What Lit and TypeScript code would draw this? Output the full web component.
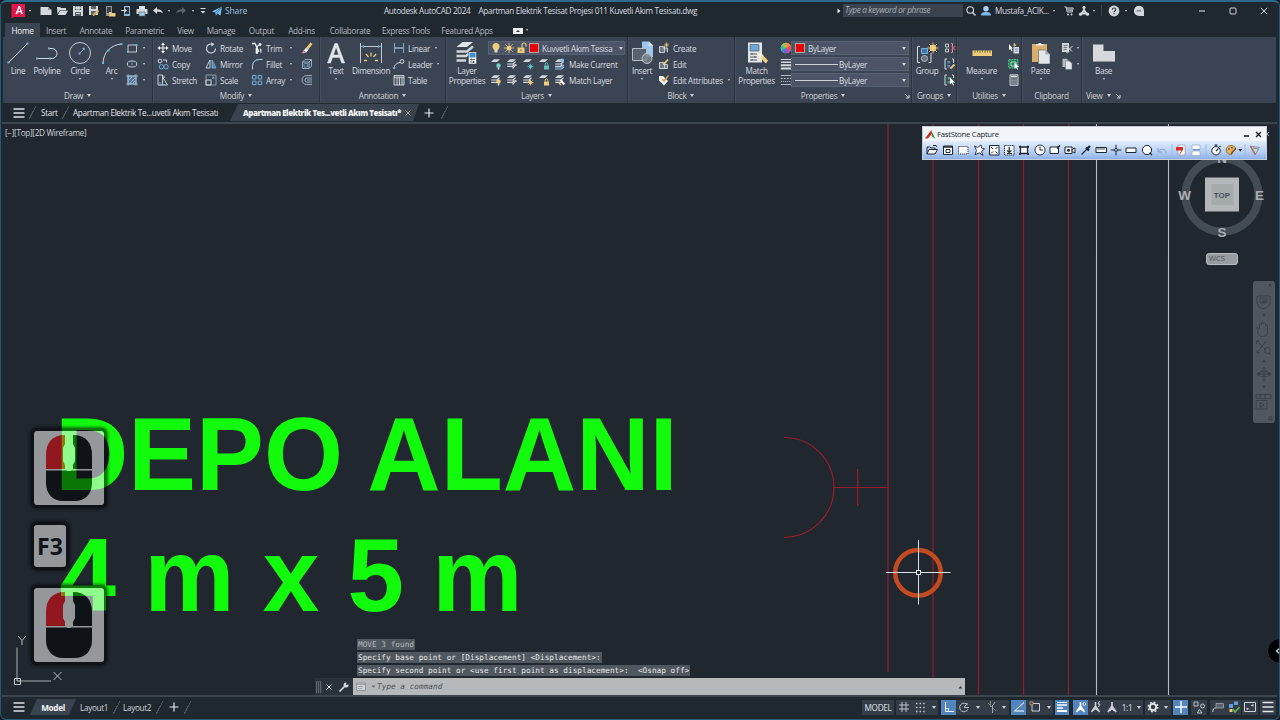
import { LitElement, html, svg, css } from "lit";
import { customElement } from "lit/decorators.js";
import { classMap } from "lit/directives/class-map.js";

const icon = (w: number, h: number, body: unknown) =>
  html`<svg class="ic" width=${w} height=${h} viewBox="0 0 ${w} ${h}">${body}</svg>`;

const W = "#d5d9dd";
const B = "#6fb0e0";
const Y = "#f0cc7a";

const A: Record<string, unknown> = {
  // title bar
  logo: icon(16, 16, svg`<path d="M1 1h3v14H1z" fill="#9a1230"/><path d="M2 1h13v13H4l-2 1z" fill="#e2174b"/><path d="M5.500 11L8.600 3h1.300L13 11h-1.800l-.6-1.800H7.900L7.300 11zM8.300 7.900h2L9.300 5z" fill="#fff"/>`),
  newf: icon(12, 12, svg`<path d="M.5 2H8l3.500 3v5H.5z" fill="${W}"/><path d="M8 2v3h3.500z" fill="#8b939b"/>`),
  open: icon(12, 12, svg`<path d="M1 2h3l1 1h5v2H4L1.500 9z" fill="${W}"/><path d="M4.200 5.500H12L9.500 10H1.800z" fill="${W}"/>`),
  save: icon(12, 12, svg`<path d="M1 1h10v10H1z" fill="${W}"/><path d="M3 1h6v4H3zM3 7h6v4H3z" fill="#59626c"/><path d="M4 2h4v2H4zM4 8.500h4" stroke="${W}" fill="${W}"/>`),
  saveas: icon(12, 12, svg`<path d="M1 1h9v9H1z" fill="${W}"/><path d="M3 1h5v3H3zM3 6h5v4H3z" fill="#59626c"/><path d="M5 10.500l5.500-5" stroke="#e6b45f" stroke-width="2"/>`),
  openweb: icon(12, 12, svg`<path d="M2 1h6v10H2z" fill="#8f979f"/><path d="M3 2h4v6H3z" fill="#3b444e"/><path d="M5 7h2l1 1h3.500v3.500H5z" fill="${Y}"/>`),
  saveweb: icon(12, 12, svg`<path d="M4 1h6v10H4z" fill="#8fb8dc"/><path d="M5 2.200h4v6.800H5z" fill="#2d3741"/><path d="M1 5.500h5M4 3.500l2.500 2L4 7.500" stroke="${W}" fill="none"/>`),
  print: icon(12, 12, svg`<path d="M3 1h6v3H3z" fill="#cfe4f4"/><path d="M.5 4h11v5h-11z" fill="${W}"/><path d="M3 7h6v4H3z" fill="#9fd0ec" stroke="#4c555f" stroke-width=".6"/>`),
  undo: icon(12, 10, svg`<path d="M1 4.500L5 1v2.200c3.500 0 5.500 1.500 6 4.300C9.500 6 8 5.700 5 5.700V8z" fill="${W}"/>`),
  redo: icon(12, 10, svg`<path d="M11 4.500L7 1v2.200C3.500 3.200 1.500 4.700 1 7.500 2.500 6 4 5.700 7 5.700V8z" fill="#59626c"/>`),
  custom: icon(8, 8, svg`<path d="M1.500 1.500h5" stroke="${W}"/><path d="M1.500 4h5L4 6.500z" fill="${W}"/>`),
  share: icon(12, 12, svg`<path d="M1 6.500L11 1.500 9.500 10.500 6 8.500 5 11 4.200 7.500z" fill="#7cc0f0"/><path d="M4.200 7.500L11 1.500 6 8.500" stroke="#1f4f78" stroke-width=".6" fill="none"/>`),
  search: icon(12, 12, svg`<circle cx="5.200" cy="5" r="3.300" fill="none" stroke="${W}" stroke-width="1.100"/><path d="M7.600 7.500L10.500 10.500" stroke="${W}" stroke-width="1.300"/>`),
  user: icon(12, 12, svg`<circle cx="6" cy="3.700" r="2.700" fill="#a8d4f5"/><path d="M1 10.500c0-3 2-3.500 5-3.500s5 .5 5 3.500z" fill="#7cb8ea"/>`),
  cart: icon(12, 12, svg`<path d="M1.500 2h1.700l1 5h5l1-4H4" fill="none" stroke="${W}"/><path d="M4 3.500h6L9 6.500H4.500z" fill="#8d959d"/><circle cx="5" cy="9.500" r="1" fill="${W}"/><circle cx="8.500" cy="9.500" r="1" fill="${W}"/>`),
  adsk: icon(12, 12, svg`<path d="M6 1v4L2.500 10M6 5l3.500 5M3.500 8.500h5" stroke="${W}" stroke-width="1.800" fill="none"/><circle cx="6" cy="2.500" r="1.600" fill="${W}"/><circle cx="2.500" cy="9.200" r="1.600" fill="${W}"/><circle cx="9.500" cy="9.200" r="1.600" fill="${W}"/>`),
  help: icon(12, 12, svg`<circle cx="6" cy="6" r="5.400" fill="${W}"/><path d="M4.300 4.700c0-2.300 3.500-2.200 3.500-.1C7.800 6 6 5.900 6 7.300M6 8.300v1.200" stroke="#28313a" fill="none" stroke-width="1.100"/>`),
  chat: icon(12, 12, svg`<path d="M6 .8a5 5 0 1 0 0 10.200h5V6A5 5 0 0 0 6 .8z" fill="${W}"/><path d="M3 6.500l1.500-2 1.500 1 1.500-1.500 1 2.500z" fill="#808890"/>`),
  min: icon(8, 8, svg`<path d="M1 4h6" stroke="#e4e7ea"/>`),
  max: icon(8, 8, svg`<rect x="1" y="1" width="6" height="6" rx="1" fill="none" stroke="#e4e7ea" stroke-width=".9"/>`),
  close: icon(8, 8, svg`<path d="M.8 .8l6.400 6.400M7.200 .8L.8 7.200" stroke="#e4e7ea" stroke-width=".9"/>`),
  // draw
  line: icon(24, 24, svg`<path d="M2.500 21.500L21.500 2.500" stroke="${W}" stroke-width="1"/><path d="M1.500 20.500h2v2h-2zM20.500 1.500h2v2h-2z" fill="${B}"/>`),
  polyline: icon(24, 24, svg`<path d="M2 17.500h15a5 5 0 1 0 0-10H14" stroke="${W}" fill="none"/><path d="M1 16.500h2v2H1zM13 6.500h2v2h-2zM14 16.500h2v2h-2z" fill="${B}"/>`),
  circle: icon(24, 24, svg`<circle cx="12" cy="12" r="10.500" fill="none" stroke="${W}" stroke-width=".9"/><path d="M11.500 12.500l4.500-4.500" stroke="${B}"/><path d="M10.500 11.500h2v2h-2z" fill="${B}"/><path d="M14 7l3-.5-.5 3z" fill="${B}"/>`),
  arc: icon(24, 24, svg`<path d="M3 22C3.500 11 11 4 21.500 3" fill="none" stroke="${W}"/><path d="M2 21h2v2H2zM7.500 8.500h2v2h-2zM20.500 2h2v2h-2z" fill="${B}"/>`),
  rect: icon(12, 12, svg`<path d="M2 3h8.500v7H2z" fill="none" stroke="${W}" stroke-width=".9"/><path d="M1 9h2v2H1zM9.500 2h2v2h-2z" fill="${B}"/>`),
  ellipse: icon(12, 12, svg`<ellipse cx="6" cy="6" rx="4.800" ry="3" fill="none" stroke="${W}" stroke-width=".9"/><path d="M5.300 5.300h1.500v1.500H5.300zM5.300 2.300h1.500v1.200H5.300z" fill="${B}"/>`),
  hatch: icon(12, 12, svg`<path d="M2 2h8v8H2z" fill="#56799c" stroke="${B}"/><path d="M2 0v12M10 0v12M0 2h12M0 10h12" stroke="${W}" stroke-width=".6"/><path d="M3 6l3-3M4 9l5-5M7 9l2-2" stroke="#cde" stroke-width=".5"/>`),
  // modify
  move: icon(12, 12, svg`<path d="M6 2v8M2 6h8" stroke="#f2f4f6" stroke-width="1.100"/><path d="M6 .5L8 3H4zM6 11.500L4 9h4zM.5 6L3 4v4zM11.500 6L9 8V4z" fill="#f2f4f6"/>`),
  rotate: icon(12, 12, svg`<path d="M7.500 2.300A4.500 4.500 0 1 0 10.500 6.500" fill="none" stroke="${W}" stroke-width="1.100"/><path d="M6 .3l3.500 2L6.500 4.600z" fill="${W}"/>`),
  trim: icon(12, 12, svg`<path d="M1 1.500h3L8 10M7.500 3L5 7" stroke="#f2f4f6" stroke-width="1.300" fill="none"/><circle cx="9" cy="2.500" r="1.400" fill="#f2f4f6"/><path d="M5 7h1.500v4.500H5zM9 7h1v4" stroke="#f2f4f6" stroke-width=".7" fill="#f2f4f6"/>`),
  eraser: icon(12, 12, svg`<path d="M5 6l4.500-5.500L11.500 2 7 8z" fill="${Y}"/><path d="M2.500 8.500L5 6l2.200 2-2 2.500z" fill="#fff"/><path d="M.8 10.500L2.600 8.500l2.400 2-2.500 1z" fill="#e78ea0"/>`),
  copy: icon(12, 12, svg`<circle cx="3" cy="3" r="1.900" fill="none" stroke="${W}"/><path d="M6 2h3.500v2.500" fill="none" stroke="${W}"/><circle cx="4.500" cy="8.800" r="2.200" fill="none" stroke="${B}"/><circle cx="9" cy="8.800" r="2.200" fill="none" stroke="${B}"/>`),
  mirror: icon(12, 12, svg`<path d="M5 2v8H1z" fill="none" stroke="${W}" stroke-width=".9"/><path d="M7 2v8h4z" fill="#4f85b3" stroke="${B}" stroke-width=".9"/>`),
  fillet: icon(12, 12, svg`<path d="M1.500 11.500V8A6.500 6.500 0 0 1 8 1.500h3.500" fill="none" stroke="${W}" stroke-width=".9"/><path d="M1.500 7.500A6 6 0 0 1 7.500 1.500" fill="none" stroke="${B}"/>`),
  box: icon(12, 12, svg`<path d="M1.500 4h6.500v6.500H1.500zM1.500 4L4 1.500h6.500L8 4M10.500 1.500V8L8 10.500" fill="none" stroke="#9fb8cc" stroke-width=".9"/><path d="M3 5.500h3.500V9H3z" fill="none" stroke="${B}" stroke-width=".7"/>`),
  stretch: icon(12, 12, svg`<path d="M1 1h4.500v10H1zM5.500 3l5 8h-5M7 1.500L7 4" fill="none" stroke="${W}" stroke-width=".9"/><path d="M3 8v3h5" fill="none" stroke="${B}"/>`),
  scale: icon(12, 12, svg`<path d="M1 1h10v10H1z" fill="none" stroke="#9aa7b3" stroke-width=".9"/><path d="M1 6h5v5H1z" fill="none" stroke="${W}"/><path d="M6.500 5.500l2.500-2.500M7 3h2v2" stroke="${B}" fill="none" stroke-width=".8"/>`),
  array: icon(12, 12, svg`<path d="M1.500 1.500h3.500v3.500H1.500zM7.200 1.500h3.500v3.500H7.200zM1.500 7.200h3.500v3.500H1.500zM7.200 7.200h3.500v3.500H7.200z" fill="none" stroke="${B}"/>`),
  offset: icon(12, 12, svg`<path d="M11 1.500H5.500a4.500 4.500 0 0 0 0 9H11" fill="none" stroke="#9fb8cc" stroke-width=".9"/><path d="M11 4H6a2 2 0 0 0 0 4.200h5M11 6H6" fill="none" stroke="#9fb8cc" stroke-width=".9"/>`),
  // annotation
  text: icon(22, 24, svg`<path d="M2.500 22L9.800 2.500h2.600L19.700 22h-3l-2-5.500H7.500l-2 5.500zM8.400 13.900h5.400L11.100 6z" fill="#e3e6e9" stroke="#e3e6e9" stroke-width=".5"/>`),
  dimension: icon(24, 24, svg`<path d="M1.500 2v20M22.500 2v20M2.500 5.500h19" stroke="${W}" fill="none" stroke-width=".9"/><path d="M2 5.500l3-1.500v3zM22 5.500l-3-1.500v3z" fill="${B}"/><path d="M5 19.500h3M16 19.500h3M7 13l2.500 3M17 13l-2.500 3M12 11.500v4" stroke="${Y}" stroke-width="1.300"/>`),
  linear: icon(12, 12, svg`<path d="M1.500 1v10M10.500 1v10" stroke="${B}"/><path d="M2 6h8" stroke="${W}"/>`),
  leader: icon(12, 12, svg`<path d="M1 11C1 7 4 5 7 4.500" fill="none" stroke="${W}"/><circle cx="9" cy="3.500" r="1.900" fill="none" stroke="${W}"/><path d="M0 9l1.200 2.500L3 9.500z" fill="${B}"/>`),
  table: icon(12, 12, svg`<path d="M1 1.500h10v9.500H1z" fill="#515b68" stroke="${W}" stroke-width=".9"/><path d="M1 3.300h10M4 3v8M6.500 3v8M9 3v8" stroke="${W}" stroke-width=".9"/>`),
  // layers
  layerprops: icon(26, 24, svg`<path d="M8.500 1H19l-6 5H2.500z" fill="#e3e6e9"/><path d="M2.500 10.500H13l6-5M2.500 15H12l3-2.500M2.500 19.500H12" stroke="#d0d4d8" stroke-width="2.400" fill="none"/><path d="M14.500 11h8v12h-8z" fill="#f1f3f5" stroke="#3b4453" stroke-width=".5"/><path d="M15.500 12h6v4.500h-6z" fill="#3f91d5"/><path d="M16 18.500h5M16 21h5M17.500 17.500v2M19.500 20v2" stroke="#424b57" stroke-width=".8"/>`),
  bulb: icon(10, 12, svg`<circle cx="5" cy="4.500" r="3.500" fill="${Y}"/><path d="M3.500 7h3v3.500h-3z" fill="#e8dcb8"/>`),
  sun: icon(12, 12, svg`<circle cx="6" cy="6" r="2.600" fill="${Y}"/><path d="M6 .8v2M6 9.200v2M.8 6h2M9.200 6h2M2.300 2.300l1.400 1.400M8.300 8.300l1.400 1.400M9.700 2.300L8.300 3.700M3.700 8.300L2.300 9.700" stroke="${Y}" stroke-width=".9"/>`),
  unlock: icon(12, 12, svg`<path d="M1.500 5.500h7v5.500h-7z" fill="${Y}"/><path d="M6 5.500V3a2 2 0 0 1 4 0v1.500" fill="none" stroke="${Y}" stroke-width="1.200"/><path d="M4.500 7.500h1v1.500h-1z" fill="#3b4453"/>`),
  // block
  insert: icon(24, 24, svg`<path d="M12 .5h7l4 4V16H12z" fill="#9cc8ec"/><path d="M19 .5v4h4z" fill="#e3f1fb"/><path d="M2.500 7.500h14v12h-14z" fill="#59636f" stroke="#b4bcc4"/><circle cx="17" cy="17.500" r="5" fill="#7c8791" fill-opacity=".8" stroke="#c4cad0"/>`),
  create: icon(12, 12, svg`<path d="M1.500 4.500h5v6h-5zM5 6h4.500v4.500" fill="#6e7985" stroke="${W}" stroke-width=".9"/><path d="M8.500 .5v5M6 3h5M7 1.300l3 3.300M10 1.300L7 4.600" stroke="${Y}" stroke-width=".7"/>`),
  edit: icon(12, 12, svg`<path d="M1.500 4.500h5v6h-5zM5 6.500h4.500v4H5" fill="#6e7985" stroke="${W}" stroke-width=".9"/><path d="M5.500 6.500L10 1.500" stroke="${Y}" stroke-width="1.800"/>`),
  editattr: icon(12, 12, svg`<path d="M1 2h4l5 5-4 4.500-5-5z" fill="#f2f4f6"/><path d="M4 5l2 2 4.500-5.500" stroke="#d59b4d" stroke-width="1.500" fill="none"/>`),
  // properties
  matchprops: icon(24, 24, svg`<path d="M3 1.500h14v20H3z" fill="#e3e6e9"/><path d="M5 3.500h9v6.500H5z" fill="#6ba6d6" stroke="#53606d" stroke-width=".7"/><path d="M5 13h7M5 16h7M5 19h7M7 12v2M10 15v2M7 18v2" stroke="#545e69"/><path d="M12 14l3-3 8 8.500-2 3z" fill="${Y}"/><path d="M12 14l3.500-2.500 3 3-3 3z" fill="#f4f0df"/>`),
  wheel: icon(12, 12, svg`<circle cx="6" cy="6" r="5.300" fill="#e8a53c"/><path d="M6 6V.7A5.300 5.300 0 0 1 10.600 3.400z" fill="#f08b3f"/><path d="M6 6l4.600-2.600a5.300 5.300 0 0 1 0 5.300z" fill="#e64c58"/><path d="M6 6l4.600 2.700A5.300 5.300 0 0 1 6 11.300z" fill="#b24ac0"/><path d="M6 6v5.300A5.300 5.300 0 0 1 1.400 8.700z" fill="#3e78e0"/><path d="M6 6L1.400 8.700a5.300 5.300 0 0 1 0-5.300z" fill="#38b6b0"/><path d="M6 6L1.400 3.400A5.300 5.300 0 0 1 6 .7z" fill="#8cc84e"/>`),
  weights: icon(12, 12, svg`<path d="M.8 1.500h10.400" stroke="${W}" stroke-width="1"/><path d="M.8 4.300h10.400" stroke="${W}" stroke-width="1.500"/><path d="M.8 7.200h10.400M.8 10.600h10.400" stroke="${W}" stroke-width="2"/>`),
  types: icon(12, 12, svg`<path d="M.8 1.500h10.400M.8 10.500h10.400" stroke="#b9c0c6" stroke-width=".9"/><path d="M.8 4.500h10.400" stroke="#b9c0c6" stroke-width=".9" stroke-dasharray="2 1"/><path d="M.8 7.500h10.400" stroke="#b9c0c6" stroke-dasharray="1 1"/>`),
  // groups
  group: icon(24, 24, svg`<path d="M5 5.500H2.500v16H5M13.500 21.500H16V12" fill="none" stroke="${W}"/><path d="M6.500 7.500h6v5h-6z" fill="#3e78ac" stroke="${B}"/><circle cx="9.500" cy="17.500" r="3" fill="#66717d" stroke="#b4bcc4"/><circle cx="18" cy="7" r="3.200" fill="${Y}"/><path d="M18 1.500v11M12.500 7h11M14 3l8 8M22 3l-8 8" stroke="${Y}" stroke-width=".9"/>`),
  ungroup: icon(12, 12, svg`<path d="M1.500 2h3v3h-3zM1.500 7h3v3h-3z" fill="none" stroke="${W}" stroke-width=".9"/><path d="M7 1.500h1.500v9H7" fill="none" stroke="#ef8291"/><path d="M7.500 4l3.500 4M11 4L7.500 8" stroke="#e35f70" stroke-width="1.100"/>`),
  gedit: icon(12, 12, svg`<path d="M3 1H1v10h2M8 1h1.500v4" fill="none" stroke="${W}"/><path d="M3.500 3h2.500v2.500H3.500zM3.500 7H6v2.500H3.500z" fill="#528fc7"/><path d="M6.500 10.500l4-4" stroke="${Y}" stroke-width="1.800"/>`),
  gsel: icon(12, 12, svg`<path d="M3 1H1v10h2M8 1h1.500v3" fill="none" stroke="${W}"/><path d="M3.500 3h3v2.500h-3zM3.500 7h2.500v2.500H3.500z" fill="#43a874"/><path d="M6 3.500l5 5H8.800L10 11l-1 .5-1.200-2.500L6 10.500z" fill="#fff"/>`),
  // utilities
  measure: icon(24, 24, svg`<path d="M2.500 9.500h19.500v5.500H2.500z" fill="${Y}"/><path d="M5 9.500v2.500M7.500 9.500v2M10 9.500v2.500M12.500 9.500v2M15 9.500v2.500M17.500 9.500v2M20 9.500v2.500" stroke="#6e5a2e" stroke-width=".8"/>`),
  qselect: icon(12, 12, svg`<path d="M1 2l4 4.500H3.500L4.500 9l-1 .5L2.500 7 1 8z" fill="#fff"/><path d="M5.500 5H11v6.500H5.500z" fill="#d8dcdf"/><path d="M7 7h3M7 9h3" stroke="#4a84b8" stroke-width=".8"/><path d="M6.500 .5L5 3.500h1.500L6 5.500 8.500 2.500H7z" fill="${Y}"/>`),
  selall: icon(12, 12, svg`<path d="M.8 1.500h9v8.500h-9z" fill="#2f7d59" stroke="#54c794" stroke-dasharray="2 .7"/><path d="M3 4h5v4H3z" fill="none" stroke="#8fe0b9"/><path d="M6.500 4.500l4.500 4.500H9l1 2.300-.8.4L8.200 9.500l-1.700 1z" fill="#fff"/>`),
  calc: icon(12, 12, svg`<path d="M2 .8h8v10.500H2z" fill="#59636f" stroke="#c8cdd2"/><path d="M3 2.500h6" stroke="#e3e6e9" stroke-width="1.500"/><path d="M4 4.500v6M6 4.500v6M8 4.500v6" stroke="#c8cdd2" stroke-width=".9" stroke-dasharray="1 .6"/>`),
  // clipboard
  paste: icon(24, 24, svg`<path d="M3 3h15v18H3z" fill="#d9ae6c"/><path d="M7 4.500V3h2a2 2 0 0 1 3.500 0h2v1.500z" fill="#f1f3f5"/><path d="M9.500 9h7l4.500 4.500V23H9.500z" fill="#e3e6e9" stroke="#3b4453" stroke-width=".5"/><path d="M16.500 9v4.500H21z" fill="#a1a9b0"/>`),
  cut: icon(12, 12, svg`<path d="M1 1h7v9H1z" fill="#cdd2d6"/><path d="M2.500 3.500h4M2.500 5.500h4M2.500 7.500h3" stroke="#5c6670" stroke-width=".8"/><path d="M6 4.500l5 5M11.500 4L6 9.500" stroke="#e3e6e9"/><circle cx="6.500" cy="9.500" r="1.200" fill="none" stroke="#e3e6e9" stroke-width=".8"/>`),
  copyclip: icon(12, 12, svg`<path d="M1.500 .8H6l1.500 2V9h-6z" fill="#b7bdc3"/><path d="M4.500 3h4l2.500 2.500v6H4.500z" fill="#e3e6e9" stroke="#59636f" stroke-width=".5"/>`),
  base: icon(24, 24, svg`<path d="M1 3.500h10.500v6.500H23v10.500H1z" fill="#d6d9dc"/>`),
};

const layerIcon = (badge: string, kind: number, full: boolean) =>
  icon(12, 12, svg`
    <path d="M4 1.200h6L7 4H1z" fill="${W}"/>
    ${full ? svg`<path d="M1.200 6H7l2.500-2.300M1.200 8.300H6.500l2-1.800" stroke="${W}" fill="none" stroke-width="1.200"/>` : ""}
    ${kind === 0 ? svg`<circle cx="8.500" cy="7.500" r="2.200" fill="${badge}"/><path d="M7.700 9.500h1.600v2H7.700z" fill="#f2f4f6"/>` : ""}
    ${kind === 1 ? svg`<path d="M6.500 10.500l3.500-4" stroke="${badge}" stroke-width="1.500"/><path d="M8 6h2.500v2.500z" fill="${badge}"/>` : ""}
    ${kind === 2 ? svg`<circle cx="8.500" cy="8.500" r="1.600" fill="${badge}"/><path d="M8.500 5.500v6M5.500 8.500h6M6.400 6.400l4.200 4.200M10.600 6.400l-4.200 4.200" stroke="${badge}" stroke-width=".8"/>` : ""}
    ${kind === 3 ? svg`<path d="M6 7.500h5v4H6z" fill="${badge}"/><path d="M7.200 7.500V6.300a1.300 1.300 0 0 1 2.600 0v1.200" fill="none" stroke="${badge}"/>` : ""}
    ${kind === 4 ? svg`<path d="M1 9h6.500l2.500-2M1 11h6.500l2.500-2" stroke="${badge}" fill="none" stroke-width="1.200"/><circle cx="8" cy="2.500" r="2" fill="${badge}"/>` : ""}
    ${kind === 5 ? svg`<path d="M5.500 6l4 5.500 1.500-2-4-4z" fill="#fff"/><path d="M5 9l2 2" stroke="${badge}" stroke-width="1.500"/>` : ""}`);

const K = "#1d2733";
const divider = svg`<path d="M6 0v12" stroke="#9db6de" stroke-width=".8"/>`;
const capture: [number, unknown][] = [
  [15.5, svg`<path d="M1 3h3l1 1h4v1.500M1 10V3M1 10l2-4.500h8.500L9 10z" fill="#fff" stroke="${K}"/><path d="M7 1.500h3l1 1.500" fill="none" stroke="${K}"/>`],
  [15.5, svg`<path d="M1.500 2h9v8.500h-9z" fill="#fff" stroke="${K}"/><path d="M1.500 3h9" stroke="${K}" stroke-width="1.500"/><path d="M4 5.500h4v3H4z" fill="none" stroke="${K}"/>`],
  [15.5, svg`<path d="M1.500 2.500h9.500v7.500h-9.500z" fill="#fff" stroke="${K}" stroke-dasharray="1 1"/>`],
  [15.2, svg`<path d="M1.500 2l3 1.500L8 1l.5 3 3 1-3 2.500 1.500 4-3.500-2.500L2 10.500 3.500 6.500z" fill="#fff" stroke="${K}" stroke-width=".9"/>`],
  [15.3, svg`<path d="M1.500 1.500h9.500v9.500h-9.500z" fill="#fff" stroke="${K}"/><path d="M3 3l2 2M9.500 3l-2 2M3 9.500l2-2M9.500 9.500l-2-2" stroke="${K}"/>`],
  [15.4, svg`<path d="M1.500 1.500h9.500v9.500h-9.500z" fill="#eef4fc" stroke="${K}" stroke-dasharray="1.200 .7"/><path d="M6.200 3v5M4 6.300l2.200 2.200 2.200-2.200M4 9.500h5" stroke="${K}" fill="none" stroke-width="1.200"/>`],
  [15.2, svg`<path d="M2.500 3h7v6.500h-7z" fill="#fff" stroke="${K}" stroke-width="1.300"/><path d="M1 1.700h2v2H1zM9 1.700h2v2H9zM1 8.700h2v2H1zM9 8.700h2v2H9z" fill="${K}"/>`],
  [15.3, svg`<circle cx="6" cy="6" r="5" fill="#fff" stroke="${K}" stroke-width=".9"/><path d="M6 2.500V6h3" stroke="${K}" fill="none"/>`],
  [15.4, svg`<path d="M1 3h8.500v6.500H1z" fill="#fff" stroke="${K}"/><path d="M8 4.500l3-3" stroke="${K}" stroke-width="1.500"/>`],
  [15.2, svg`<path d="M1 3h7v6.500H1z" fill="#fff" stroke="${K}"/><path d="M8 5.500l3-1.500v5L8 7.500z" fill="#fff" stroke="${K}"/><circle cx="4.500" cy="6.300" r="1.500" fill="${K}"/>`],
  [15.2, svg`<path d="M1.500 10.500L7 5" stroke="${K}" stroke-width="1.300"/><path d="M6 3.500l3 3M7.500 4.500L10 2" stroke="${K}" stroke-width="2.300"/>`],
  [15.4, svg`<path d="M1 3.500h10.500v5H1z" fill="#fff" stroke="${K}"/><path d="M3 4v2M5 4v2M7 4v2M9 4v2" stroke="${K}" stroke-width=".8"/>`],
  [15.2, svg`<path d="M6 .8v10.500M.8 6h10.500" stroke="${K}"/><circle cx="6" cy="6" r="1.500" fill="#dfeafc" stroke="${K}"/>`],
  [15.4, svg`<path d="M1 4h10v4.500H1z" fill="#fff" stroke="${K}"/>`],
  [15.3, svg`<circle cx="6" cy="6" r="4.600" fill="#fff" stroke="${K}"/><path d="M9 9l2 2" stroke="${K}" stroke-width="1.300"/>`],
  [15.6, svg`<path d="M2 4v4h4M2 8c2-4 8-3.500 8 1" fill="none" stroke="#86a5d2"/>`],
  [3.5, divider],
  [15, svg`<path d="M3 1h7v10H3z" fill="#fff" stroke="#8c99aa" stroke-width=".7"/><path d="M1 3h7v3.500H1z" fill="#d92b23"/><path d="M4.500 10c2-1 2.500-4 2-5" stroke="#d92b23" fill="none"/>`],
  [15, svg`<path d="M2 1h8v4.500H2z" fill="#fff" stroke="#98aed0" stroke-width=".8"/><path d="M2 7h8v4.500H2z" fill="#fff" stroke="#98aed0" stroke-width=".8"/><path d="M3 5.800h7" stroke="#5d83ba"/>`],
  [5, divider],
  [15, svg`<circle cx="6" cy="6.800" r="4.200" fill="#fff" stroke="${K}"/><path d="M6 2.500V1M4.500 1h3M6 7l2.500-2.500M9.500 3l1-1" stroke="${K}" stroke-width="1.200"/>`],
  [15, svg`<path d="M6 1.500c6 0 5.500 6 1.500 5.500-1 .5 1 3.500-2 3.500C0 10.500-.5 1.500 6 1.500z" fill="#e7b65c" stroke="#8a5a22" stroke-width=".8"/><circle cx="4" cy="5" r="1" fill="#c03a30"/><circle cx="7" cy="3.700" r="1" fill="#2b6dc4"/><path d="M6 10l5-6" stroke="#7a4b1c" stroke-width="1.200"/>`],
  [4, svg`<path d="M4.300 5h4L6.300 7.500z" fill="#10161d"/>`],
  [6, divider],
  [14, svg`<path d="M1 2l9.500 1.500L6 11z" fill="#c9d3e8" stroke="#8a7c9c" stroke-width=".8"/><path d="M1.500 2l5 8.500" stroke="#c25e4c" stroke-width="1.300"/><path d="M4 4l5 1" stroke="#55a558"/>`],
];

type Tool = { w: number; g?: unknown; t?: string; on?: boolean; caret?: boolean; gap?: boolean };
const S = "#ccd1d6";
const status: Tool[] = [
  { w: 32, t: "MODEL" },
  { w: 2, gap: true },
  { w: 15, g: svg`<path d="M4 1v10M8 1v10M1 4h10M1 8h10" stroke="${S}" stroke-width=".9"/>` },
  { w: 18, g: svg`<path d="M2 2.500h9M2 6.500h9M2 10.500h9" stroke="${S}" stroke-width="1.400" stroke-dasharray="1.400 2.200"/>` },
  { w: 9, caret: true },
  { w: 3, gap: true },
  { w: 15, on: true, g: svg`<path d="M2.500 1v9.500H11" stroke="#fff" fill="none"/><path d="M2.500 7.500h3v3" stroke="#fff" fill="none" stroke-width=".8"/>` },
  { w: 16, g: svg`<path d="M9.500 4A4.300 4.300 0 1 0 10 8M6 6.500L9.500 2M6 6.500h5" fill="none" stroke="${S}" stroke-width=".9"/>` },
  { w: 12, caret: true },
  { w: 15, g: svg`<path d="M2 2l8 8" stroke="#7c858e"/><path d="M4.500 0v6" stroke="#6d9b61"/><path d="M6.500 4v8M9 1L7 4" stroke="#9ea6ae"/>` },
  { w: 10, caret: true },
  { w: 2, gap: true },
  { w: 15, on: true, g: svg`<path d="M11 1.500L1.500 10H11" fill="none" stroke="#fff"/>` },
  { w: 18, g: svg`<path d="M3 2.500h7.500V10H3z" fill="none" stroke="${S}"/><path d="M1 .8h3v3H1z" fill="#3a424d" stroke="#c79d73" stroke-width=".8"/>` },
  { w: 9, caret: true },
  { w: 2, gap: true },
  { w: 14, on: true, g: svg`<path d="M1 1.500h10" stroke="#fff"/><path d="M1 4h10M1 7h6" stroke="#fff" stroke-width="1.600"/><path d="M1 10h10" stroke="#fff" stroke-width="2"/>` },
  { w: 4, gap: true },
  { w: 15, on: true, g: svg`<path d="M5.500 1v4L1.500 11M5.500 5l4 6M3 9.500l2.500-2 2.500 2" stroke="#fff" fill="none" stroke-width="1.700"/><circle cx="9.300" cy="3" r="1.400" fill="none" stroke="#fff" stroke-width=".8"/>` },
  { w: 16, g: svg`<path d="M5.500 1v4L1.500 11M5.500 5l4 6M3 9.500l2.500-2 2.500 2" stroke="${S}" fill="none" stroke-width="1.500"/><path d="M9.500 0L8 3h2L8.500 6" stroke="${S}" fill="none"/>` },
  { w: 15, g: svg`<path d="M6 1v4L2 11M6 5l4 6M3.500 9.500l2.500-2 2.500 2" stroke="${S}" fill="none" stroke-width="1.700"/>` },
  { w: 16, t: "1:1" },
  { w: 8, caret: true },
  { w: 2, gap: true },
  { w: 15, g: svg`<circle cx="6" cy="6" r="3.200" fill="none" stroke="#e2e5e8" stroke-width="2"/><circle cx="6" cy="6" r="4.800" fill="none" stroke="#e2e5e8" stroke-width="1.500" stroke-dasharray="1.900 1.870"/>` },
  { w: 11, caret: true },
  { w: 2, gap: true },
  { w: 15, on: true, g: svg`<path d="M6 0v12M0 6h12" stroke="#fff" stroke-width="1.400"/>` },
  { w: 3, gap: true },
  { w: 16, g: svg`<path d="M1 1h4v4H1zM7 9L9 12H4.500L6 8.500z" fill="none" stroke="${S}" stroke-width=".9"/><circle cx="9.500" cy="5" r="2" fill="none" stroke="${S}" stroke-width=".9"/>` },
  { w: 3, gap: true },
  { w: 16, g: svg`<path d="M4 2.500h7.500V7H4z" fill="#59626c" stroke="#9ea6ae" stroke-width=".8"/><path d="M.8 11c0-3 1-4 3-4" fill="none" stroke="${S}"/>` },
  { w: 15, g: svg`<path d="M1 3h4v4H1zM6 .5h4v3.500H6z" fill="#5f9fd8"/><path d="M1.500 8h3v3h-3z" fill="${Y}"/><path d="M5 8l2 3 4.500-5" stroke="#69b957" fill="none" stroke-width="1.500"/>` },
  { w: 1, gap: true },
  { w: 16, g: svg`<path d="M.5 1.500h11v9H.5z" fill="none" stroke="${S}"/><path d="M6.500 4.500L9.500 3v2.500zM2.500 9V6.500L5.500 8z" fill="${S}"/>` },
  { w: 2, gap: true },
  { w: 16, g: svg`<path d="M.5 1.500h11M.5 6h11M.5 10.500h11" stroke="#e6e9ec" stroke-width="1.400"/>` },
];

const caret = html`<i class="caret"></i>`;
const slot = (w: number, body: unknown) => html`<span class="slot" style="width:${w}px">${body}</span>`;
const big = (w: number, key: string, lines: string[], drop = false) => html`
  <div class="big" style="width:${w}px">
    <span class="pic">${A[key]}</span>
    ${lines.map((l) => html`<span class="lbl">${l}</span>`)}
    ${drop ? html`<i class="caret tiny"></i>` : ""}
  </div>`;
type Row = [unknown, string?, number?];
const stack = (w: number, rows: Row[]) => html`
  <div class="stack" style="width:${w}px">
    ${rows.map(([i, label, at]) => html`
      <div class="row"><span class="slot i16">${i}</span>${label !== undefined
        ? html`<span class="name" style="width:${at ?? 60}px">${label}</span>` : ""}${at !== undefined ? html`<i class="caret tiny"></i>` : ""}</div>`)}
  </div>`;
const panel = (w: number, title: string, drop: boolean, body: unknown, extra: unknown = "") => html`
  <section class="panel" style="width:${w}px">
    <div class="body">${body}</div>
    <footer><span>${title}</span>${drop ? caret : ""}${extra}</footer>
  </section>`;
const corner = html`<svg class="corner" width="6" height="6" viewBox="0 0 6 6"><path d="M1 1l3.500 3.500M5 2v3H2" fill="none" stroke="#cfd4d9"/></svg>`;

const mouse = html`
  <div class="keyframe">
    <svg width="70" height="74" viewBox="0 0 70 74">
      <rect width="70" height="74" rx="3" fill="#fff"/>
      <path d="M31 4v34H12V24C12 12 18 4 31 4z" fill="#fb0a10"/>
      <path d="M39 4v34h19V24C58 12 52 4 39 4z" fill="#000"/>
      <path d="M12 39.500h46V52c0 11-7 18-17 18H29c-10 0-17-7-17-18z" fill="#000"/>
      <path d="M33 2h4v11h2l2 4v13l-2 4h-2v6h-4v-6h-2l-2-4V17l2-4h2z" fill="#fff"/>
    </svg>
  </div>`;

@customElement("app-root")
export class AppRoot extends LitElement {
  static styles = css`
    :host { display: block; width: 1280px; height: 720px; background: #0d1822; }
    * { box-sizing: border-box; }
    .win { position: relative; width: 1280px; height: 720px; overflow: hidden; display: flex; flex-direction: column;
      background: #1f272f; border: 1px solid #245b78; border-top: 2px solid #2b6a8c; border-radius: 6px;
      font: 8.200px "Open Sans", "Noto Sans", sans-serif; letter-spacing: -.32px; color: #d9dde0; white-space: nowrap; }
    .ic { display: block; flex: none; overflow: visible; }
    .slot { display: flex; align-items: center; justify-content: center; flex: none; height: 100%; }
    .i16 { width: 16px; }
    .caret { display: block; flex: none; width: 0; height: 0; border: 2.500px solid transparent; border-top: 3px solid #cdd2d7; border-bottom: 0; }
    .caret.tiny { border-width: 2px 1.800px 0; }
    .title { display: flex; height: 17px; align-items: center; flex: none; padding-left: 8px; }
    .title .docs { width: 451px; display: flex; gap: 8px; flex: none; }
    .title .share { width: 160px; flex: none; padding-left: 1px; color: #9cc4e2; font-size: 8.600px; letter-spacing: -.2px; }
    .title .find { width: 120px; height: 13px; flex: none; line-height: 12px; margin-left: 1px; padding-left: 2px; background: #3b4350; color: #aab0b7; font-style: italic; }
    .title .me { width: 57px; padding-left: 1px; flex: none; }
    .rule { width: 1px; height: 11px; background: #3c454f; }
    .tabs { display: flex; flex: none; height: 14px; margin-top: 4px; padding-left: 4px; align-items: stretch; color: #b3b9bf; }
    .tabs span { display: flex; align-items: center; justify-content: center; flex: none; }
    .tabs .on { background: #3b4453; color: #f0f2f4; }
    .pill { width: 10px; height: 6px; background: #eef0f2; margin: 1px 3px 0 0; }
    .pill i { border-top: 0; border-bottom: 2.500px solid #2a333c; border-left-width: 2px; border-right-width: 2px; }
    .ribbon { display: flex; flex: none; height: 66px; margin: 0 3px 0 2px; background: #3b4453; }
    .panel { display: flex; flex-direction: column; flex: none; border-right: 1px solid #2c3440; box-shadow: 1px 0 #444d5b; }
    .panel:last-child { border: 0; box-shadow: none; }
    .panel .body { display: flex; height: 51px; padding-top: 3px; }
    .panel footer { position: relative; display: flex; height: 15px; align-items: center; justify-content: center; gap: 4px; color: #ccd1d6; }
    .panel:last-child footer { justify-content: flex-start; padding-left: 4px; }
    .corner { position: absolute; right: 1px; top: 5px; }
    .panel:last-child .corner { position: static; }
    .big { display: flex; flex-direction: column; align-items: center; flex: none; }
    .pic { display: flex; height: 26px; flex: none; align-items: center; }
    .lbl { height: 10px; line-height: 10px; flex: none; }
    .big .caret { margin-top: 2px; }
    .stack { display: flex; flex-direction: column; flex: none; }
    .row { display: flex; height: 16px; align-items: center; flex: none; }
    .name { flex: none; padding-left: 1px; }
    .combo { display: flex; align-items: center; flex: none; height: 14px; background: #4b5567; border: 1px solid #566173; padding-right: 2px; }
    .combo b { font-weight: 400; flex: 1; padding-left: 3px; }
    .sw { width: 10px; height: 10px; background: #e60000; border: 1px solid #b9a3a8; flex: none; margin-left: 3px; }
    .ln { width: 43px; height: 1px; background: #cdd2d7; margin-left: 3px; }
    .combo .ln + b { padding-left: 1px; }
    .props { display: flex; flex-direction: column; }
    .props .combo { width: 118px; margin: 1px 0; }
    .lay { width: 137px; }
    .lay > .combo { margin-top: 1px; height: 14px; margin-bottom: 1px; padding-right: 1px; }
    .lay .combo .slot { width: 13px; }
    .lay .combo .sw { margin: 0 0 0 1px; }
    .lay .row .s { width: 16px; }
    .files { display: flex; flex: none; height: 19px; align-items: center; padding-left: 8px; color: #e3e6e9; }
    .files > *, .sheets > * { flex: none; }
    .files .slash, .sheets .slash { width: 7px; height: 13px; background: linear-gradient(118deg, transparent 46%, #4b545e 46%, #4b545e 56%, transparent 56%); }
    .files .start { width: 25px; padding-left: 4px; }
    .files .doc { width: 161px; padding-left: 4px; }
    .files .cur { display: flex; align-items: center; width: 189px; height: 17px; padding-left: 13px; background: #3a4350; color: #f2f4f5; font-weight: 700; font-size: 7.900px; letter-spacing: -.44px; clip-path: polygon(8px 0, 100% 0, calc(100% - 6px) 100%, 0 100%); }
    .files .cur b { width: 161px; flex: none; }
    .edge { flex: none; height: 2px; background: #3d454f; margin: 0 2px 0 1px; }
    .canvas { position: relative; flex: 1; background: #20272f; overflow: hidden; }
    .draw { position: absolute; left: -1px; top: 0; }
    .view { position: absolute; left: 4px; top: 3px; color: #d0d4d8; }
    .keys { position: absolute; left: 33px; opacity: .52; }
    .k1 { top: 307px; } .k2 { top: 401px; } .k3 { top: 463.500px; }
    .keyframe { display: flex; border-radius: 3px; box-shadow: 0 0 0 3px #000, 0 0 3px 4px #000; background: #000; }
    .cap { width: 32px; height: 42px; background: #fff; border-radius: 3px; align-items: center; justify-content: center; color: #000; font: 700 23px "Noto Sans", sans-serif; letter-spacing: 0; padding-bottom: 1px; }
    .hist { position: absolute; left: 356px; top: 514.500px; display: flex; flex-direction: column; align-items: flex-start; gap: 2.300px; letter-spacing: 0; font: 7.760px "DejaVu Sans Mono", monospace; color: #e6e8ea; }
    .hist span { height: 11px; line-height: 11px; background: #50575e; padding: 0 1px; white-space: pre; }
    .hist .old { color: #b5babf; }
    .cmd { position: absolute; left: 314px; top: 554px; width: 650px; height: 17px; display: flex; align-items: center; background: #b5b9bb; letter-spacing: 0; font: italic 7.760px "DejaVu Sans Mono", monospace; color: #4d5256; }
    .cmd .grip { display: flex; align-items: center; width: 38px; height: 17px; background: #2a323b; }
    .cmd .txt { flex: 1; }
    .capture { position: absolute; left: 921px; top: 124px; width: 345px; height: 34px; background: #f1f4f9; border: 1px solid #c7ced8; font-size: 7.800px; letter-spacing: -.3px; color: #23282e; display: flex; flex-direction: column; }
    .capture .cap1 { display: flex; height: 14px; align-items: center; padding-left: 1px; }
    .capture .cap1 b { font-weight: 400; width: 304px; padding-left: 1px; }
    .capture .bar { display: flex; height: 18px; align-items: center; padding-left: 1.500px; background: linear-gradient(#e2edfd, #b6cff5 60%, #8fb1e8); }
    .nav { position: absolute; left: 1252px; top: 157px; width: 22px; height: 142px; border-radius: 3px; background: #50575e; }
    .wcs { position: absolute; left: 1205px; top: 128.500px; width: 32px; height: 12px; border-radius: 3px; background: #979ca1; color: #4d545b; font-size: 7.500px; letter-spacing: 0; line-height: 9px; padding-left: 2px; border: .5px solid #b8bcc0; }
    .fly { position: absolute; left: 1266px; top: 513.500px; width: 26px; height: 26px; border-radius: 50%; background: #000; border: 1px solid #2b3036; }
    .foot { display: flex; flex: none; height: 22px; align-items: center; padding-bottom: 2px; }
    .sheets { display: flex; flex: none; align-items: center; height: 16px; width: 861px; padding-left: 8px; color: #d2d6da; }
    .sheets .cur { display: flex; align-items: center; justify-content: center; width: 46px; height: 16px; background: #3a4350; color: #f5f6f7; font-weight: 700; clip-path: polygon(7px 0, 100% 0, calc(100% - 7px) 100%, 0 100%); }
    .sheets .lay2 { width: 36px; padding-left: 3px; }
    .tool { display: flex; align-items: center; justify-content: center; flex: none; height: 15px; background: #343c47; color: #dfe2e5; }
    .tool.on { background: #5285bd; }
    .tool.gap { background: none; }
  `;

  private titleBar() {
    const left: [number, string][] = [[18, "logo"], [6, "^"], [5, ""], [16, "newf"], [16, "open"], [16, "save"], [16, "saveas"], [16, "openweb"], [16, "saveweb"], [16, "print"], [16, "undo"], [6, "^"], [18, "redo"], [6, "^"], [14, "custom"], [14, "share"]];
    const right: [number, string][] = [[15, "cart"], [15, "adsk"], [6, "^"], [9, "|"], [16, "help"], [8, "^"], [18, "chat"], [46, ""], [16, "min"], [15, ""], [16, "max"], [15, ""], [16, "close"]];
    const draw = ([w, k]: [number, string]) =>
      slot(w, k === "^" ? html`<i class="caret tiny"></i>` : k === "|" ? html`<i class="rule"></i>` : A[k] ?? "");
    return html`<header class="title">
      ${left.map(draw)}
      <span class="share">Share</span>
      <span class="docs"><span>Autodesk AutoCAD 2024</span><span>Apartman Elektrik Tesisat Projesi 011 Kuvetli Akım Tesisatı.dwg</span></span>
      ${slot(7, html`<svg width="4" height="6" viewBox="0 0 4 6"><path d="M.5 .5L3.500 3 .5 5.500z" fill="#e6e9ec"/></svg>`)}
      <span class="find">Type a keyword or phrase</span>
      ${slot(15, A.search)}${slot(16, A.user)}
      <span class="me">Mustafa_ACIK...</span>${slot(6, html`<i class="caret tiny"></i>`)}
      ${slot(4, "")}${right.map(draw)}
    </header>`;
  }

  private ribbonTabs() {
    const t: [string, number][] = [["Home", 35], ["Insert", 32], ["Annotate", 48], ["Parametric", 49], ["View", 33], ["Manage", 38], ["Output", 43], ["Add-ins", 37], ["Collaborate", 60], ["Express Tools", 52], ["Featured Apps", 70]];
    return html`<nav class="tabs">
      ${t.map(([n, w], i) => html`<span class=${classMap({ on: i === 0 })} style="width:${w}px">${n}</span>`)}
      ${slot(11, "")}<span><span class="pill"><i class="caret"></i></span><i class="caret tiny"></i></span>
    </nav>`;
  }

  private ribbon() {
    return html`<div class="ribbon">
      ${panel(150, "Draw", true, html`
        ${big(30, "line", ["Line"])}${big(28, "polyline", ["Polyline"])}${big(38, "circle", ["Circle"], true)}${big(25, "arc", ["Arc"], true)}
        ${stack(28, [[A.rect, "", 3], [A.ellipse, "", 3], [A.hatch, "", 3]])}`)}
      ${panel(167, "Modify", true, html`
        ${slot(2, "")}
        ${stack(48, [[A.move, "Move"], [A.copy, "Copy"], [A.stretch, "Stretch"]])}
        ${stack(46, [[A.rotate, "Rotate"], [A.mirror, "Mirror"], [A.scale, "Scale"]])}
        ${stack(50, [[A.trim, "Trim", 25], [A.fillet, "Fillet", 25], [A.array, "Array", 25]])}
        ${stack(16, [[A.eraser], [A.box], [A.offset]])}`)}
      ${panel(126, "Annotation", true, html`
        ${big(32, "text", ["Text"], true)}${big(38, "dimension", ["Dimension"])}${slot(1, "")}
        ${stack(54, [[A.linear, "Linear", 28], [A.leader, "Leader", 30], [A.table, "Table"]])}`)}
      ${panel(182, "Layers", true, html`
        ${big(42, "layerprops", ["Layer", "Properties"])}
        <div class="stack lay">
          <div class="combo"><span class="slot">${A.bulb}</span><span class="slot">${A.sun}</span><span class="slot">${A.unlock}</span><i class="sw"></i><b>Kuvvetli Akım Tesisa</b>${caret}</div>
          <div class="row">${[layerIcon("#6fd0c4", 0, false), layerIcon("#b9c0c6", 1, true), layerIcon("#5fbfc4", 2, false), layerIcon("#62bdb9", 3, false)].map((l) => html`<span class="slot s">${l}</span>`)}
            <span class="slot i16">${layerIcon("#8cc0ec", 4, true)}</span><span class="name">Make Current</span></div>
          <div class="row">${[layerIcon(Y, 0, true), layerIcon("#b9c0c6", 1, true), layerIcon(Y, 2, true), layerIcon(Y, 3, false)].map((l) => html`<span class="slot s">${l}</span>`)}
            <span class="slot i16">${layerIcon(Y, 5, true)}</span><span class="name">Match Layer</span></div>
        </div>`)}
      ${panel(107, "Block", true, html`
        ${big(28, "insert", ["Insert"], true)}
        ${stack(79, [[A.create, "Create"], [A.edit, "Edit"], [A.editattr, "Edit Attributes", 56]])}`)}
      ${panel(177, "Properties", true, html`
        ${big(43, "matchprops", ["Match", "Properties"])}
        ${stack(13, [[A.wheel], [A.weights], [A.types]])}
        <div class="props">
          <div class="combo"><i class="sw"></i><b>ByLayer</b>${caret}</div>
          <div class="combo"><i class="ln"></i><b>ByLayer</b>${caret}</div>
          <div class="combo"><i class="ln"></i><b>ByLayer</b>${caret}</div>
        </div>`, corner)}
      ${panel(45, "Groups", true, html`${big(30, "group", ["Group"])}${stack(14, [[A.ungroup], [A.gedit], [A.gsel]])}`)}
      ${panel(65, "Utilities", true, html`${big(49, "measure", ["Measure"], true)}${stack(15, [[A.qselect], [A.selall], [A.calc]])}`)}
      ${panel(60, "Clipboard", false, html`${big(37, "paste", ["Paste"], true)}${stack(22, [[A.cut, "", 2], [A.copyclip, "", 2]])}`)}
      ${panel(194, "View", true, html`${big(43, "base", ["Base"], true)}`, corner)}
    </div>`;
  }

  private drawing() {
    const reds: [number, number][] = [[888, 548], [933, 553], [978.5, 571], [1023.5, 571], [1068.5, 571]];
    return html`<svg class="draw" width="1280" height="572" viewBox="0 0 1280 572" letter-spacing="0">
      ${reds.map(([x, y]) => svg`<path d="M${x} 0V${y}" stroke="#8a1f2b" stroke-width="1.300"/>`)}
      <path d="M1096.500 0V571M1168.500 0V571" stroke="#b9bdc1" stroke-width="1.100"/>
      <path d="M784 313.500A49.900 49.900 0 0 1 784 413.300M834 363.500H888M857.700 345V382" fill="none" stroke="#9b1c2c" stroke-width="1.200"/>
      <g font-family="Liberation Sans" font-weight="700" font-size="101.600" fill="#12fb0c">
        <text transform="translate(55 366) scale(1 1.03)">DEPO ALANI</text>
        <text transform="translate(59.500 486.600) scale(1 1.015)">4 m x 5 m</text>
      </g>
      <circle cx="918" cy="448.800" r="22.800" fill="none" stroke="#c54a20" stroke-width="4.500"/>
      <path d="M886 448.500H916M920.500 448.500H950.500M918.500 416V446M918.500 451V480.500" stroke="#dfe2e4"/>
      <rect x="916.500" y="446.500" width="4" height="4" fill="#20272f" stroke="#e8eaec"/>
      <path d="M17 523.500V554M20.500 557H51" stroke="#a9aeb3"/>
      <path d="M14.500 554.500h6v6h-6zM17 554v3h3" fill="none" stroke="#c8ccd0"/>
      <path d="M18 512l4 4.500 4-4.500M22 516.500V521M53.500 548l8 8M61.500 548l-8 8" fill="none" stroke="#b9bdc1"/>
      <circle cx="1222" cy="71" r="36.500" fill="none" stroke="#434b53" stroke-width="8"/>
      <rect x="1205" y="53.500" width="34" height="34" fill="#b3b7b9"/>
      <rect x="1211.500" y="60" width="22" height="21" fill="#a5aaad"/>
      <text x="1222" y="74" text-anchor="middle" font-family="Liberation Sans" font-weight="700" font-size="8" fill="#4b5258">TOP</text>
      <g font-family="Liberation Sans" font-weight="700" font-size="13.500" fill="#a9adb1" text-anchor="middle">
        <text x="1184.500" y="75.500">W</text><text x="1259.500" y="75.500">E</text><text x="1222" y="113">S</text><text x="1222" y="38.500">N</text>
      </g>
      <path d="M1265 8l4 4M1269 8l-4 4" stroke="#a9adb1"/>
    </svg>`;
  }

  private navBar() {
    return html`<svg class="nav" width="22" height="142" viewBox="0 0 22 142">
      <g fill="none" stroke="#343b42" stroke-width=".8">
        <path d="M16 3l2.500 2.500M18.500 3L16 5.500"/>
        <path d="M4 15h13v5a6.500 6.500 0 0 1-13 2zM7 17h7v5H7zM9.500 19h3v2h-3z"/>
        <path d="M5 49l-1.500-2c0-1.500 2-.5 3 1V43c1-1.500 2 0 2 1v-2c1-1.500 2 0 2 1v-1c1-1 2 0 2 1.500v1c1-1 2 0 2 1v5c0 4-2 5-5 5-3 0-4-2-5-4z"/>
        <path d="M4 60l9 9M13 60l-9 12M3.500 63v-3h3M4 69v3h3"/><circle cx="14.500" cy="69.500" r="3"/><path d="M16 72l2 2"/>
        <path d="M11 86v14M4 93h14M9 88l2-2 2 2M9 98l2 2 2-2M6 91l-2 2 2 2M16 91l2 2-2 2"/><ellipse cx="11" cy="93" rx="5" ry="3"/>
        <path d="M3 113.500h15v4H3zM7 113.500v4M12 113.500v4M3 119.500h11v8.500H3zM7 121.500v5l4-2.500z"/>
        <path d="M16 136h3v3h-3z"/>
      </g>
      <path d="M9.500 33.500h3l-1.500 2zM9.500 79.500h3l-1.500 2zM9.500 105h3l-1.500 2z" fill="#30373e"/>
    </svg>`;
  }

  private captureBar() {
    return html`<div class="capture">
      <div class="cap1">
        ${icon(12, 12, svg`<path d="M1 10.500L7.500 2l.5 3.500-4 5z" fill="#d3261c"/><path d="M8 4l3.500 7-4-3z" fill="#2f9a3a"/>`)}
        <b>FastStone Capture</b>
        ${slot(12, html`<svg width="7" height="7" viewBox="0 0 7 7"><path d="M1 5h5" stroke="#111" stroke-width="1.500"/></svg>`)}
        ${slot(12, html`<svg width="7" height="7" viewBox="0 0 7 7"><path d="M1 1l5 5M6 1L1 6" stroke="#111" stroke-width="1.300"/></svg>`)}
      </div>
      <div class="bar">${capture.map(([w, g]) => slot(w, icon(12, 12, g)))}</div>
    </div>`;
  }

  render() {
    const burger = icon(12, 12, svg`<path d="M.5 2h11M.5 6h11M.5 10h11" stroke="#dfe2e5" stroke-width="1.300"/>`);
    const plus = icon(12, 12, svg`<path d="M6 1.500v9M1.500 6h9" stroke="#e6e9ec" stroke-width="1.200"/>`);
    return html`<div class="win">
      ${this.titleBar()}${this.ribbonTabs()}${this.ribbon()}
      <div class="files">
        ${slot(20, burger)}<i class="slash"></i>${slot(1, "")}<span class="start">Start</span><i class="slash"></i>
        <span class="doc">Apartman Elektrik Te...uvetli Akım Tesisatı</span>
        <span class="cur"><b>Apartman Elektrik Tes...vetli Akım Tesisatı*</b>${icon(8, 8, svg`<path d="M1.500 1.500l5 5M6.500 1.500l-5 5" stroke="#a9b0b7" stroke-width=".9"/>`)}</span>
        ${slot(20, plus)}${slot(2, "")}<i class="slash"></i>
      </div>
      <div class="edge"></div>
      <main class="canvas">
        ${this.drawing()}
        <div class="view">[−][Top][2D Wireframe]</div>
        <div class="keys k1">${mouse}</div>
        <div class="keys k2"><div class="keyframe cap">F3</div></div>
        <div class="keys k3">${mouse}</div>
        <div class="hist"><span class="old">MOVE 3 found</span><span>Specify base point or [Displacement] &lt;Displacement&gt;:</span><span>Specify second point or &lt;use first point as displacement&gt;:  &lt;Osnap off&gt;</span></div>
        <div class="cmd">
          <span class="grip">${slot(7, icon(5, 12, svg`<path d="M.7 .5v11M2.700 .5v11M4.700 .5v11" stroke="#b9bdc1" stroke-width=".9" stroke-dasharray="1 1"/>`))}${slot(13, icon(8, 8, svg`<path d="M1.500 1.500l5 5M6.500 1.500l-5 5" stroke="#dfe2e5"/>`))}${slot(18, icon(12, 12, svg`<path d="M1.500 10.500L7 5" stroke="#d5d9dd" stroke-width="1.700"/><path d="M10.500 3.500A2.500 2.500 0 1 1 8.500 1.500L8 4z" fill="#d5d9dd"/>`))}</span>
          ${slot(16, icon(10, 9, svg`<path d="M.5 1h9v7.500h-9z" fill="#cfd2d4" stroke="#8e9397"/><path d="M1 2.500h8M2 4.500h5M2 6.500h4" stroke="#8e9397" stroke-width=".8"/>`))}
          ${slot(8, html`<svg width="5" height="4" viewBox="0 0 5 4"><path d="M.5 .5h4L2.500 3z" fill="#6c7175"/></svg>`)}
          <span class="txt">Type a command</span>
          ${slot(9, html`<svg width="5" height="4" viewBox="0 0 5 4"><path d="M.5 3.500h4L2.500 1z" fill="#3a3f44"/></svg>`)}
        </div>
        <div class="wcs">WCS</div>
        ${this.navBar()}
        <div class="fly">${icon(24, 24, svg`<path d="M13 8l-4.500 4 4.500 4" fill="none" stroke="#e6e9ec" stroke-width="1.200"/>`)}</div>
      </main>
      <div class="edge"></div>
      <footer class="foot">
        <div class="sheets">${slot(20, burger)}${slot(1, "")}<span class="cur">Model</span>${slot(1, "")}<span class="lay2">Layout1</span><i class="slash"></i><span class="lay2">Layout2</span><i class="slash"></i>${slot(21, plus)}<i class="slash"></i></div>
        ${status.map((s) => html`<span class=${classMap({ tool: true, on: !!s.on, gap: !!s.gap })} style="width:${s.w}px">${s.t ?? (s.caret ? caret : s.g ? icon(12, 12, s.g) : "")}</span>`)}
      </footer>
      ${this.captureBar()}
    </div>`;
  }
}
